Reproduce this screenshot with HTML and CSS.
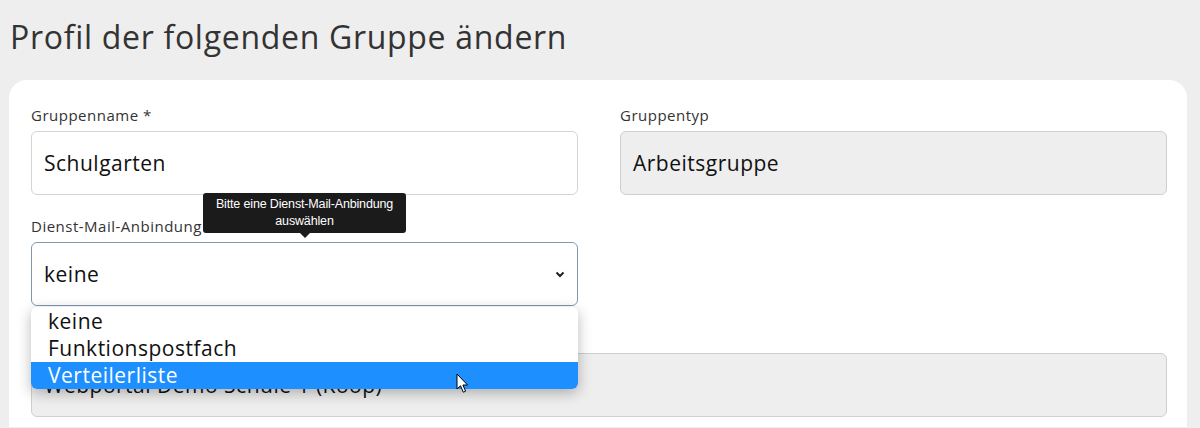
FILE: index.html
```html
<!DOCTYPE html>
<html lang="de">
<head>
    <meta charset="UTF-8">
    <meta name="viewport" content="width=device-width, initial-scale=1.0">
    <title>Gruppe ändern</title>
    <link rel="stylesheet" href="styles.css">
</head>
<body>
    <h1 class="page-title">Profil der folgenden Gruppe ändern</h1>
    <div class="card">
        <div class="grid">
            <div class="field">
                <label class="label">Gruppenname *</label>
                <div class="input">Schulgarten</div>
            </div>
            <div class="field">
                <label class="label">Gruppentyp</label>
                <div class="input disabled">Arbeitsgruppe</div>
            </div>
            <div class="field select-field">
                <label class="label">Dienst-Mail-Anbindung</label>
                <div class="input select">
                    keine
                    <svg class="chevron" width="10" height="7" viewBox="0 0 10 7">
                        <polyline points="1.5,1.5 5,5 8.5,1.5" fill="none" stroke="#222" stroke-width="2"/>
                    </svg>
                </div>
                <div class="tooltip">Bitte eine Dienst-Mail-Anbindung<br>auswählen</div>
                <ul class="dropdown">
                    <li>keine</li>
                    <li>Funktionspostfach</li>
                    <li class="active">Verteilerliste</li>
                </ul>
                <svg class="cursor" width="14" height="21" viewBox="0 0 14 21">
                    <path d="M1 1 L1 16 L4.5 12.8 L7.3 19.2 L9.6 18.2 L6.9 12 L11.6 12 Z" fill="#fff" stroke="#000" stroke-width="1" stroke-linejoin="round"/>
                </svg>
            </div>
            <div></div>
            <div class="field wide">
                <label class="label">Schule</label>
                <div class="input disabled">Webportal Demo Schule 1 (Koop)</div>
            </div>
        </div>
    </div>
</body>
</html>
```
FILE: styles.css
```css
body {
    margin: 0;
    padding: 0 13px 0 9px;
    background: #eeeeee;
    font-family: "Open Sans", sans-serif;
    color: #222;
    overflow: hidden;
}
.page-title {
    margin: 0;
    padding: 15px 0 0 1px;
    height: 80px;
    box-sizing: border-box;
    font-size: 32px;
    line-height: 44px;
    font-weight: 400;
    letter-spacing: 0.7px;
    color: #333;
}
.card {
    background: #fff;
    border-radius: 18px 18px 0 0;
    padding: 25px 20px 10px 22px;
}
.grid {
    display: grid;
    grid-template-columns: 1fr 1fr;
    column-gap: 42px;
    row-gap: 21px;
}
.wide {
    grid-column: 1 / 3;
}
.field {
    display: flex;
    flex-direction: column;
}
.select-field {
    position: relative;
}
.label {
    font-size: 15px;
    line-height: 20px;
    letter-spacing: 0.5px;
    margin-bottom: 6px;
    color: #333;
}
.input {
    height: 64px;
    box-sizing: border-box;
    border: 1px solid #d4d4d4;
    border-radius: 6px;
    padding: 0 12px;
    display: flex;
    align-items: center;
    font-size: 21px;
    letter-spacing: 0.5px;
    color: #111;
}
.disabled {
    background: #eeeeee;
    border-color: #cfcfcf;
}
.select {
    border: 1.5px solid #8197b0;
    justify-content: space-between;
}
.tooltip {
    position: absolute;
    left: 172px;
    top: -23px;
    width: 203px;
    height: 40px;
    box-sizing: border-box;
    padding-top: 3px;
    background: #1b1b1b;
    border-radius: 3px;
    color: #fff;
    font-family: "Liberation Sans", Arial, sans-serif;
    font-size: 12.5px;
    line-height: 17px;
    text-align: center;
    letter-spacing: -0.15px;
}
.tooltip::after {
    content: "";
    position: absolute;
    left: 97px;
    bottom: -5px;
    border-left: 5px solid transparent;
    border-right: 5px solid transparent;
    border-top: 5px solid #1b1b1b;
}
.dropdown {
    position: absolute;
    left: 0;
    right: 0;
    top: 91px;
    margin: 0;
    padding: 1px 0 0;
    list-style: none;
    background: #fff;
    border-radius: 6px;
    box-shadow: 0 4px 14px rgba(0, 0, 0, 0.28);
    overflow: hidden;
    z-index: 2;
}
.dropdown li {
    height: 27px;
    line-height: 27px;
    padding-left: 17px;
    font-size: 21px;
    letter-spacing: 0.5px;
    color: #111;
}
.dropdown li.active {
    background: #1e8fff;
    color: #fff;
}
.cursor {
    position: absolute;
    left: 425px;
    top: 157px;
    z-index: 3;
}
```
